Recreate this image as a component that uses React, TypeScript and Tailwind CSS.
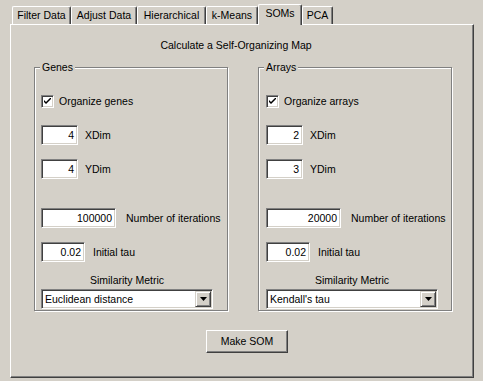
import React from "react";

const tabs = [
  { label: "Filter Data", w: "w-[59px]" },
  { label: "Adjust Data", w: "w-[66px]" },
  { label: "Hierarchical", w: "w-[69px]" },
  { label: "k-Means", w: "w-[52px]" },
  { label: "SOMs", w: "w-[44px]", active: true },
  { label: "PCA", w: "w-[31px]" },
];

function Tab({ label, w, active }: { label: string; w: string; active?: boolean }) {
  if (active) {
    return (
      <div
        className={`${w} h-[21px] mb-[-1px] relative z-10 bg-[#d4d0c8] border-l border-t border-r border-l-white border-t-white border-r-[#404040] rounded-t-[2px] shadow-[inset_-1px_0_0_#808080] flex justify-center pt-[2px] leading-[13px]`}
      >
        {label}
      </div>
    );
  }
  return (
    <div
      className={`${w} h-[18px] bg-[#d4d0c8] border-l border-t border-r border-l-white border-t-white border-r-[#404040] rounded-t-[2px] shadow-[inset_-1px_0_0_#808080] flex justify-center pt-[2px] leading-[13px]`}
    >
      {label}
    </div>
  );
}

const sunken =
  "border border-t-[#808080] border-l-[#808080] border-b-white border-r-white shadow-[inset_1px_1px_0_#404040,inset_-1px_-1px_0_#d4d0c8]";

function NumBox({ value, w }: { value: string; w: string }) {
  return (
    <div className={`${w} h-[20px] bg-white ${sunken} flex items-center justify-end pr-[3px] leading-[13px]`}>
      {value}
    </div>
  );
}

function Field({ value, label, w, gap }: { value: string; label: string; w: string; gap: string }) {
  return (
    <div className={`flex items-center ${gap}`}>
      <NumBox value={value} w={w} />
      <span className="leading-[13px]">{label}</span>
    </div>
  );
}

function Checkbox({ label }: { label: string }) {
  return (
    <div className="flex items-center gap-[5px] h-[13px]">
      <div className={`w-[13px] h-[13px] bg-white ${sunken} flex items-center justify-center`}>
        <svg width="7" height="7" viewBox="0 0 7 7">
          <path d="M0 2 L0 4 L2 6 L7 1 L7 -1 L2 4 Z" fill="#000" />
        </svg>
      </div>
      <span className="leading-[13px]">{label}</span>
    </div>
  );
}

function Select({ value }: { value: string }) {
  return (
    <div className={`w-[172px] h-[20px] bg-white ${sunken} flex items-center justify-between pl-[3px] pr-[1px]`}>
      <span className="leading-[13px]">{value}</span>
      <div className="w-[16px] h-[16px] bg-[#d4d0c8] border border-t-[#d4d0c8] border-l-[#d4d0c8] border-b-[#404040] border-r-[#404040] shadow-[inset_1px_1px_0_#fff,inset_-1px_-1px_0_#808080] flex items-center justify-center">
        <svg width="7" height="4" viewBox="0 0 7 4">
          <path d="M0 0 H7 L3.5 4 Z" fill="#000" />
        </svg>
      </div>
    </div>
  );
}

function Group({
  title,
  organize,
  x,
  y,
  iters,
  metric,
  pad,
}: {
  title: string;
  organize: string;
  x: string;
  y: string;
  iters: string;
  metric: string;
  pad: string;
}) {
  return (
    <div className="relative w-[194px] h-[244px] border border-[#808080] shadow-[1px_1px_0_#fff,inset_1px_1px_0_#fff]">
      <span className="absolute top-[-7px] left-[5px] px-[2px] bg-[#d4d0c8] leading-[13px]">{title}</span>
      <div className={`flex flex-col ${pad} pt-[27px]`}>
        <Checkbox label={organize} />
        <div className="mt-[17px]">
          <Field value={x} label="XDim" w="w-[37px]" gap="gap-[7px]" />
        </div>
        <div className="mt-[14px]">
          <Field value={y} label="YDim" w="w-[37px]" gap="gap-[7px]" />
        </div>
        <div className="mt-[29px]">
          <Field value={iters} label="Number of iterations" w="w-[75px]" gap="gap-[10px]" />
        </div>
        <div className="mt-[14px]">
          <Field value="0.02" label="Initial tau" w="w-[44px]" gap="gap-[8px]" />
        </div>
        <div className="mt-[12px] w-[172px] text-center leading-[13px]">Similarity Metric</div>
        <div className="mt-[2px]">
          <Select value={metric} />
        </div>
      </div>
    </div>
  );
}

export default function App() {
  return (
    <div className="w-[483px] h-[381px] bg-[#d4d0c8] pt-[4px] pl-[10px] font-['Liberation_Sans',Arial,sans-serif] text-[10.5px] text-black overflow-hidden">
      <div className="flex items-end h-[20px] pl-[2px]">
        {tabs.map((t) => (
          <Tab key={t.label} {...t} />
        ))}
      </div>
      <div className="w-[464px] h-[354px] border-l border-t border-r border-b border-l-white border-t-white border-r-[#404040] border-b-[#404040] shadow-[inset_-1px_-1px_0_#808080]">
        <div className="mt-[14px] w-[450px] text-center leading-[13px]">Calculate a Self-Organizing Map</div>
        <div className="flex gap-[30px] ml-[23px] mt-[15px]">
          <Group
            title="Genes"
            organize="Organize genes"
            x="4"
            y="4"
            iters="100000"
            metric="Euclidean distance"
            pad="pl-[6px]"
          />
          <Group
            title="Arrays"
            organize="Organize arrays"
            x="2"
            y="3"
            iters="20000"
            metric="Kendall's tau"
            pad="pl-[7px]"
          />
        </div>
        <button className="mt-[19px] ml-[195px] w-[82px] h-[23px] bg-[#d4d0c8] border border-t-white border-l-white border-b-[#404040] border-r-[#404040] shadow-[inset_-1px_-1px_0_#808080] leading-[13px] flex items-center justify-center">
          Make SOM
        </button>
      </div>
    </div>
  );
}
